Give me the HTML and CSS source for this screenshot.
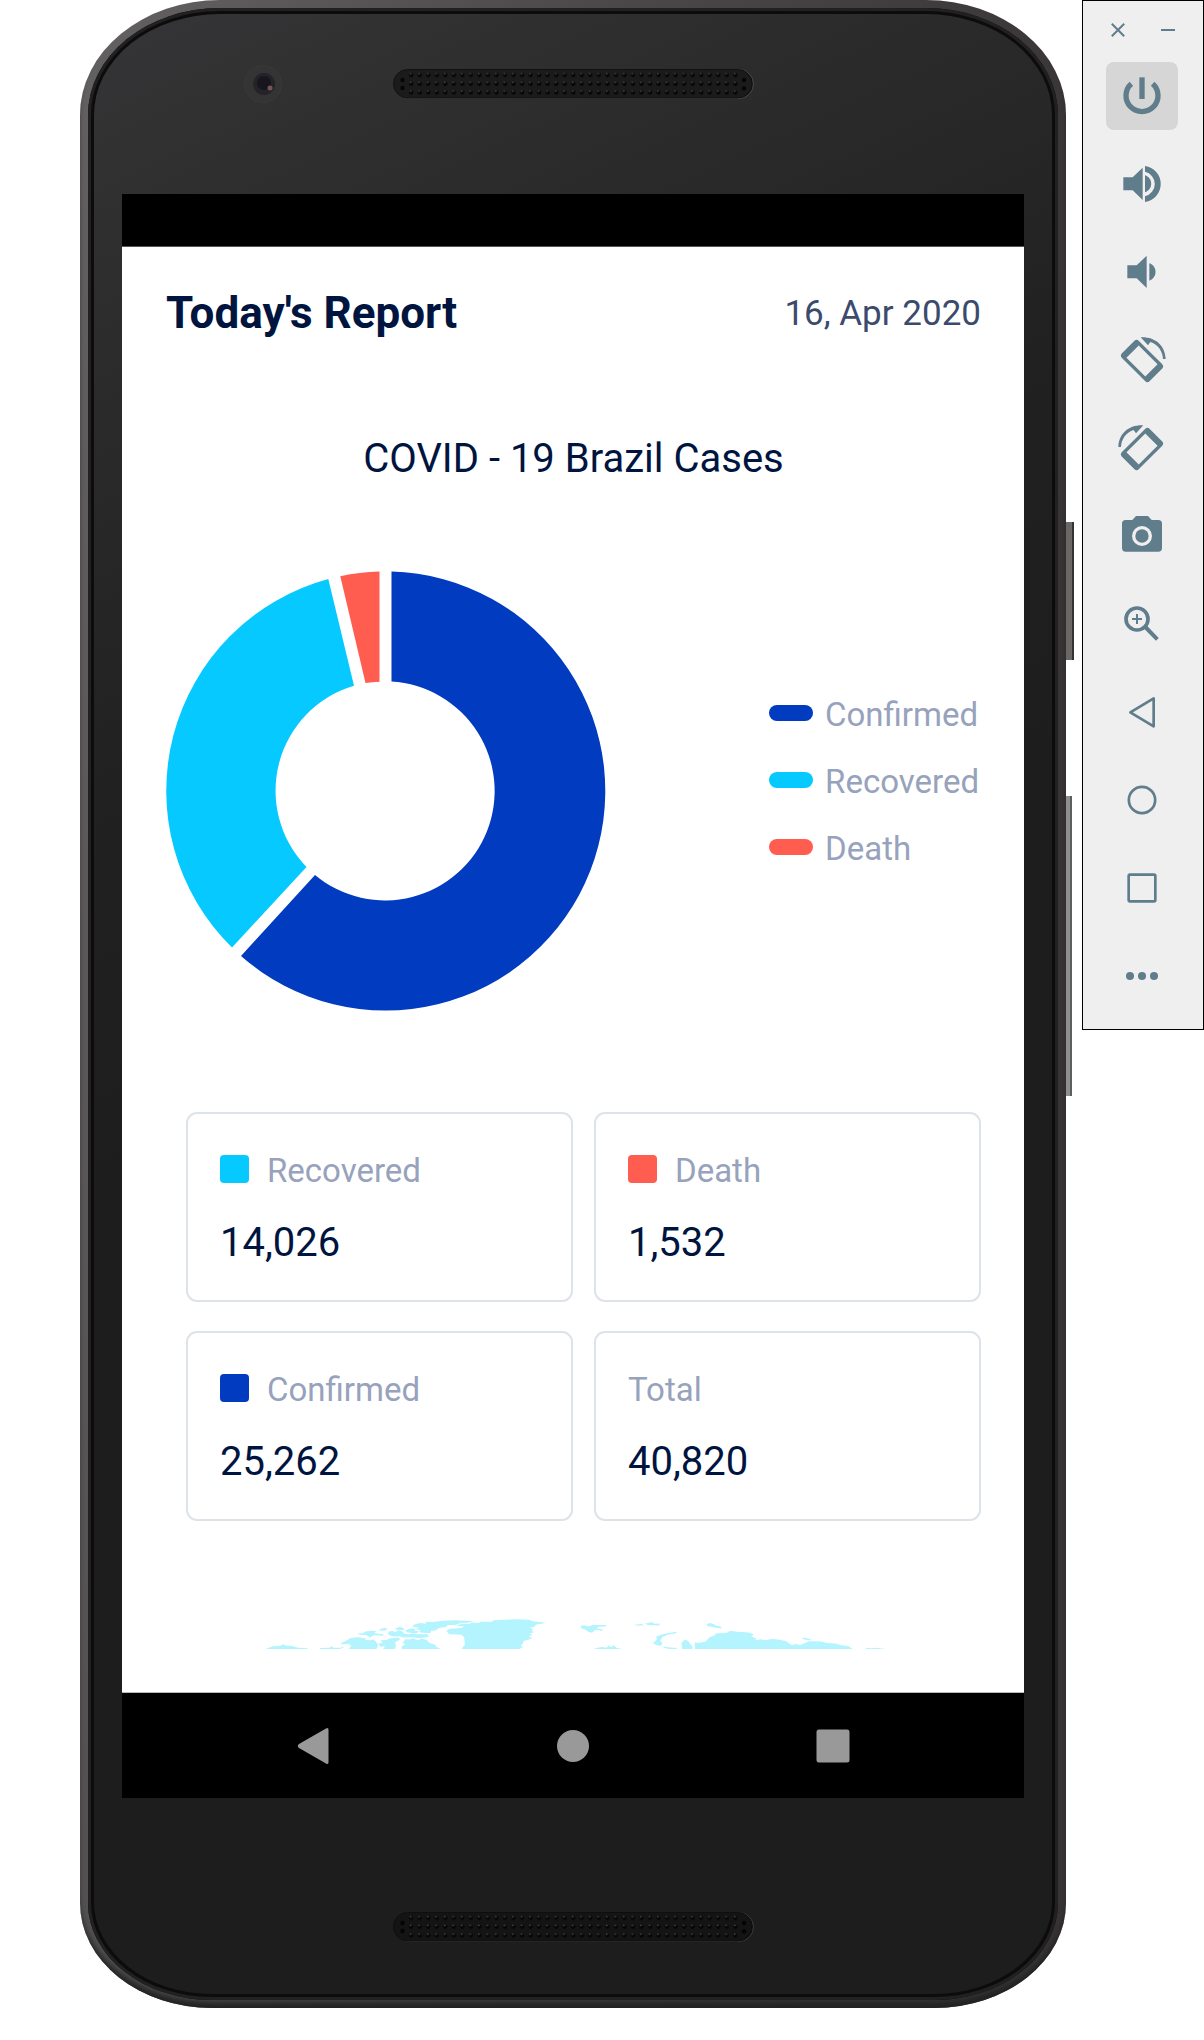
FILE: index.html
```html
<!DOCTYPE html>
<html lang="en">
<head>
<meta charset="utf-8">
<meta name="viewport" content="width=device-width, initial-scale=1">
<title>Today's Report</title>
<link rel="stylesheet" href="styles.css">
</head>
<body>
<div class="emulator">
  <div class="phone">
    <span class="side-key side-key-power"></span>
    <span class="side-key side-key-volume"></span>
    <div class="ring">
      <div class="face">
        <div class="bezel bezel-top">
          <svg class="camera" viewBox="0 0 38 38" aria-hidden="true">
            <circle cx="19" cy="19" r="18.500" fill="#343435" stroke="#3a3a3b"/>
            <circle cx="20" cy="19" r="11" fill="#242329"/>
            <circle cx="20" cy="18" r="7" fill="#18161d"/>
            <circle cx="26" cy="23" r="2.500" fill="#76555a"/>
          </svg>
          <svg class="speaker" viewBox="0 0 361 30" aria-hidden="true">
            <defs>
              <pattern id="holes" x="14" y="1.500" width="8.530" height="8.700" patternUnits="userSpaceOnUse">
                <circle cx="4.200" cy="4.500" r="2.200" fill="#060606"/>
                <circle cx="3.600" cy="3.200" r="0.900" fill="#484848"/>
              </pattern>
            </defs>
            <rect x="1.500" y="0.500" width="359" height="29" rx="14.500" fill="#1b1b1b" stroke="#4a4a4a"/>
            <rect x="0.500" y="0.500" width="358.500" height="28.500" rx="14.200" fill="#1b1b1b" stroke="#111"/>
            <rect x="14" y="1.500" width="332.600" height="26.100" fill="url(#holes)"/>
            <g fill="#060606"><circle cx="9.500" cy="11" r="2.200"/><circle cx="9.500" cy="19" r="2.200"/><circle cx="351" cy="11" r="2.200"/><circle cx="351" cy="19.500" r="2.200"/></g>
          </svg>
        </div>

        <div class="screen">
          <div class="status-bar"></div>
          <main class="report">
            <header class="report-header">
              <h1>Today's Report</h1>
              <time datetime="2020-04-16">16, Apr 2020</time>
            </header>
            <h2>COVID - 19 Brazil Cases</h2>
            <section class="chart-row">
              <svg class="donut" viewBox="0 0 440 440" role="img" aria-label="Confirmed, recovered and death shares">
                <path fill="#003bc0" d="M225.500.6A219.500 219.500 0 1 1 75 385L149 304A109.500 109.500 0 1 0 225.500 110.600Z"/>
                <path fill="#06caff" d="M66 376.500A219.500 219.500 0 0 1 162.300 8L188 114.700A109.500 109.500 0 0 0 140.500 296Z"/>
                <path fill="#ff5d4f" d="M174.300 5.300A219.500 219.500 0 0 1 213.500.6V110.800A109.500 109.500 0 0 0 199.500 112Z"/>
              </svg>
              <ul class="legend">
                <li><span class="pill confirmed"></span>Confirmed</li>
                <li><span class="pill recovered"></span>Recovered</li>
                <li><span class="pill death"></span>Death</li>
              </ul>
            </section>
            <dl class="cards">
              <div class="card"><dt><span class="swatch recovered"></span>Recovered</dt><dd>14,026</dd></div>
              <div class="card"><dt><span class="swatch death"></span>Death</dt><dd>1,532</dd></div>
              <div class="card"><dt><span class="swatch confirmed"></span>Confirmed</dt><dd>25,262</dd></div>
              <div class="card"><dt>Total</dt><dd>40,820</dd></div>
            </dl>
            <svg class="map" viewBox="34 86 1482 92" preserveAspectRatio="none" aria-hidden="true">
              <g fill="#b3f4ff">
                <path d="M42 178L60 170L78 168L84 164L92 168L104 168L120 174L142 175L142 178Z"/>
                <path d="M172 178V175L194 174L200 170L204 174L220 174L226 171L228 174L218 178Z"/>
                <path d="M240 178L246 168L240 163L222 164L222 160L236 152L244 145L262 143L280 146L280 151L292 152L298 149L304 155L310 166L306 178Z"/>
                <path d="M262 132L274 131L280 126L298 123L306 126L300 131L322 134L322 139L300 137L290 144L282 137L264 135Z"/>
                <path d="M312 121L324 115L332 118L328 123L314 124Z M350 117L362 112L372 117L370 122L354 121Z M334 127L344 124L350 128L358 122L368 126L372 133L382 134L392 131L402 134L428 134L430 142L412 145L384 143L370 144L360 140L346 141L334 136Z"/>
                <path d="M316 152L330 151L336 147L358 144L362 150L350 158L352 168L350 178H322L326 168L316 172L310 162L320 160Z"/>
                <path d="M366 178L366 170L374 165L368 160L374 149L386 150L392 146L404 152L414 147L426 152L432 160L444 165L448 171L458 178Z"/>
                <path d="M374 122L386 117L398 118L396 123L408 126L400 131L380 129Z"/>
                <path d="M392 112L394 106L410 101L424 103L422 97L440 98L464 94L492 93L536 95L524 100L506 101L494 107L476 107L470 113L454 116L446 123L436 124L434 131L410 129L408 121L396 119L408 115Z"/>
                <path d="M472 124L480 118L508 116L514 111L496 109L506 104L526 104L532 99L550 101L552 97L580 97L584 93L632 90L670 91L676 96L708 99L698 103L686 105L680 113L670 115L678 119L674 123L680 128L670 132L676 136L668 141L676 145L668 150L656 154L652 165L648 168L654 171L646 178H508L516 164L514 143L508 136L478 134Z"/>
                <path d="M790 108L802 108L808 111L820 107L852 107L850 111L832 112L830 117L844 120L842 124L826 121L818 130L808 127L804 121L794 118Z"/>
                <path d="M822 178L830 174L842 172L852 174L858 167L862 173L870 167L876 174L890 178Z"/>
                <path d="M918 106L936 104L942 108H922Z M944 103L960 98L966 103L978 102L978 108L950 107Z"/>
                <path d="M962 162L972 149L970 142L984 134L1018 127L1018 131L998 136L986 142L980 153L986 163L978 169Z M986 170L998 173L1020 175L1018 178H1002L990 175Z"/>
                <path d="M1090 104L1098 101L1106 104L1112 108L1124 112L1126 117L1112 115L1092 110Z"/>
                <path d="M1032 178L1030 160L1038 150L1046 154L1050 162L1056 170L1056 178Z"/>
                <path d="M1062 178L1062 158L1070 160L1088 156L1096 144L1108 138L1112 132L1138 130L1146 124L1162 127L1190 129L1202 134L1196 141L1208 147L1206 152L1220 149L1226 152L1246 148L1260 150L1278 154L1292 166L1304 163L1312 166L1334 155L1362 156L1376 160L1396 162L1410 167L1426 169L1436 177V178Z"/>
                <path d="M1316 148L1322 144L1338 150L1336 153Z M1466 178L1472 174L1480 176L1490 174L1512 177V178Z"/>
              </g>
            </svg>
          </main>
          <nav class="nav-bar" aria-label="Android navigation">
            <button type="button" aria-label="Back"><svg viewBox="0 0 36 36"><path d="M31 .5Q33.500-1 33.500 2V34Q33.500 37 31 35.500L4 20Q1.500 18 4 16Z"/></svg></button>
            <button type="button" aria-label="Home"><svg viewBox="0 0 36 36"><circle cx="18" cy="18" r="16"/></svg></button>
            <button type="button" aria-label="Recent apps"><svg viewBox="0 0 36 36"><rect x="1.500" y="1.500" width="33" height="33" rx="2.500"/></svg></button>
          </nav>
        </div>

        <div class="bezel bezel-bottom">
          <svg class="speaker" viewBox="0 0 361 30" aria-hidden="true">
            <rect x="1.500" y="0.500" width="359" height="29" rx="14.500" fill="#141414" stroke="#3c3c3c"/>
            <rect x="0.500" y="0.500" width="358.500" height="28.500" rx="14.200" fill="#141414" stroke="#0e0e0e"/>
            <rect x="14" y="1.500" width="332.600" height="26.100" fill="url(#holes)"/>
            <g fill="#040404"><circle cx="9.500" cy="11" r="2.200"/><circle cx="9.500" cy="19" r="2.200"/><circle cx="351" cy="11" r="2.200"/><circle cx="351" cy="19.500" r="2.200"/></g>
          </svg>
        </div>
      </div>
    </div>
  </div>

  <aside class="toolbar">
    <div class="window-controls">
      <button type="button" aria-label="Close"><svg viewBox="0 0 14 14"><path d="M.8.8L13.200 13.200M13.200.8L.8 13.200"/></svg></button>
      <button type="button" aria-label="Minimize"><svg viewBox="0 0 14 14"><path d="M0 7H14"/></svg></button>
    </div>
    <div class="tools">
      <button type="button" class="active" aria-label="Power"><svg viewBox="0 0 216 204"><path fill="none" stroke="currentColor" stroke-width="16" d="M76 65A48 48 0 1 0 140 65"/><path d="M100 46H116V111H100Z"/></svg></button>
      <button type="button" aria-label="Volume up"><svg viewBox="0 0 216 204"><path d="M52 82H80L110 53V150L80 121H52ZM117 76C142 84 142 119 117 127ZM117 48A54.500 54.500 0 0 1 117 156V139A38 38 0 0 0 117 65Z"/></svg></button>
      <button type="button" aria-label="Volume down"><svg viewBox="0 0 216 204"><path d="M64 82H92L122 53V150L92 121H64ZM130 76C155 84 155 120 130 128Z"/></svg></button>
      <button type="button" aria-label="Rotate left"><svg viewBox="0 0 216 204"><g id="rotate"><path fill-rule="evenodd" transform="translate(108 105) rotate(45)" d="M-49-36H49Q59-36 59-26V26Q59 36 49 36H-49Q-59 36-59 26V-26Q-59-36-49-36ZM-40-26V26H40V-26Z"/><path d="M104 34C148 32 177 58 179 99H171C170 75 155 55 133 48L126 58Z"/></g></svg></button>
      <button type="button" aria-label="Rotate right"><svg viewBox="0 0 216 204"><use href="#rotate" transform="translate(216 0) scale(-1 1)"/></svg></button>
      <button type="button" aria-label="Take screenshot"><svg viewBox="0 0 216 204"><path fill-rule="evenodd" d="M90 42H126L137 54H157Q168 54 168 65V138Q168 149 157 149H59Q48 149 48 138V65Q48 54 59 54H79ZM108 72A30 30 0 1 0 108 132A30 30 0 1 0 108 72Z"/><circle cx="108" cy="102" r="20"/></svg></button>
      <button type="button" aria-label="Zoom"><svg viewBox="0 0 216 204"><g fill="none" stroke="currentColor"><circle cx="93" cy="87" r="33" stroke-width="11"/><path stroke-width="6" d="M78 87H108M93 72V102"/><path stroke-width="12" d="M118 111L154 148"/></g></svg></button>
      <button type="button" aria-label="Back"><svg viewBox="0 0 216 204"><path fill="none" stroke="currentColor" stroke-width="8" stroke-linejoin="round" d="M73 103L143 61V145Z"/></svg></button>
      <button type="button" aria-label="Home"><svg viewBox="0 0 216 204"><circle cx="108" cy="102" r="39.500" fill="none" stroke="currentColor" stroke-width="8"/></svg></button>
      <button type="button" aria-label="Overview"><svg viewBox="0 0 216 204"><rect x="68" y="62" width="80" height="80" rx="4" fill="none" stroke="currentColor" stroke-width="8"/></svg></button>
      <button type="button" aria-label="More"><svg viewBox="0 0 216 204"><circle cx="72" cy="102" r="12"/><circle cx="108" cy="102" r="12"/><circle cx="144" cy="102" r="12"/></svg></button>
    </div>
  </aside>
</div>
</body>
</html>
```
FILE: styles.css
```css
* {
  box-sizing: border-box;
}

body {
  margin: 0;
  background: #fff;
  font-family: Roboto, "Liberation Sans", sans-serif;
  color: #001440;
}

h1, h2, ul, dl, dd {
  margin: 0;
  padding: 0;
}

svg {
  display: block;
}

button {
  padding: 0;
  border: 0;
  background: none;
  cursor: pointer;
}

.emulator {
  display: flex;
  align-items: flex-start;
  gap: 16px;
  padding-left: 80px;
}

/* Phone body: metal rim, black ring, then the front face */
.phone {
  position: relative;
  flex: 1;
  min-width: 0;
  padding: 8px;
  border-radius: 140px 140px 132px 132px / 115px 115px 105px 105px;
  background: linear-gradient(100deg, #636162, #4a4849 40%, #383435 80%);
  box-shadow: inset 0 -8px 6px -2px #222;
}

.ring {
  padding: 6px;
  border-radius: 132px 132px 124px 124px / 107px 107px 97px 97px;
  background: #0c0c0c;
  box-shadow: inset 0 0 0 3px #222121;
}

.face {
  padding: 0 28px;
  border-radius: 126px 126px 118px 118px / 101px 101px 92px 92px;
  background: linear-gradient(155deg, #353537, #2c2c2c 14%, #212121 32%, #1d1d1d 50%);
}

.bezel {
  display: grid;
  grid-template-columns: 1fr 361px 1fr;
}

.bezel-top {
  align-items: center;
  height: 180px;
  padding-bottom: 41px;
}

.bezel-bottom {
  align-items: start;
  height: 196px;
  padding-top: 114px;
}

.speaker {
  grid-column: 2;
  width: 361px;
  height: 30px;
}

.camera {
  justify-self: center;
  width: 38px;
  height: 38px;
  margin-left: 12px;
}

.side-key {
  position: absolute;
  left: 100%;
}

.side-key-power {
  top: 522px;
  width: 8px;
  height: 138px;
  border-right: 2px solid #353230;
  background: #6a6866;
}

.side-key-volume {
  top: 796px;
  width: 6px;
  height: 300px;
  border-right: 2px solid #5e5e5e;
  background: #8f8f8f;
}

/* Screen */
.screen {
  background: #fff;
}

.status-bar {
  height: 53px;
  border-bottom: 1px solid #555;
  background: #000;
}

.report {
  display: flex;
  flex-direction: column;
  padding: 40px 43px 43px 44px;
}

.report-header {
  display: flex;
  justify-content: space-between;
  align-items: center;
}

h1 {
  font-size: 44px;
  line-height: 52px;
  font-weight: 700;
}

time {
  font-size: 35px;
  color: #3c4a6e;
}

h2 {
  margin-top: 96px;
  font-size: 40px;
  line-height: 48px;
  font-weight: 400;
  text-align: center;
}

.chart-row {
  display: flex;
  justify-content: space-between;
  align-items: center;
  margin-top: 88px;
}

.donut {
  width: 440px;
  height: 440px;
}

.legend {
  display: flex;
  flex-direction: column;
  gap: 23px;
  padding: 0 2px 18px 0;
  list-style: none;
  font-size: 33px;
  line-height: 44px;
  color: #97a2bc;
}

.legend li {
  display: flex;
  align-items: center;
  gap: 12px;
}

.pill {
  width: 44px;
  height: 16px;
  margin-bottom: 4px;
  border-radius: 8px;
}

.confirmed {
  background: #003bc0;
}

.recovered {
  background: #06caff;
}

.death {
  background: #ff5d4f;
}

.cards {
  display: grid;
  grid-template-columns: 1fr 1fr;
  gap: 29px 21px;
  margin: 101px 0 0 20px;
}

.card {
  padding: 35px 32px 33px;
  border: 2px solid #dde3e8;
  border-radius: 11px;
}

.card dt {
  display: flex;
  align-items: center;
  gap: 18px;
  font-size: 33px;
  line-height: 44px;
  color: #97a2bc;
}

.card dd {
  margin-top: 26px;
  font-size: 40px;
  line-height: 48px;
}

.swatch {
  width: 29px;
  height: 28px;
  margin-bottom: 4px;
  border-radius: 4px;
}

.map {
  align-self: center;
  width: 624px;
  height: 31px;
  margin-top: 97px;
}

.nav-bar {
  display: flex;
  justify-content: center;
  align-items: center;
  gap: 224px;
  height: 106px;
  border-top: 1px solid #bbb;
  background: #000;
}

.nav-bar svg {
  width: 36px;
  height: 36px;
  fill: #999;
}

/* Emulator toolbar */
.toolbar {
  width: 122px;
  padding-bottom: 19px;
  border: 1px solid #000;
  background: #efefef;
}

.window-controls {
  display: flex;
  justify-content: space-between;
  align-items: center;
  height: 61px;
  padding: 0 28px 3px;
}

.window-controls svg {
  width: 14px;
  height: 14px;
  fill: none;
  stroke: #607d8b;
  stroke-width: 2;
}

.tools {
  display: flex;
  flex-direction: column;
  gap: 20px;
  padding-left: 23px;
}

.tools button {
  width: 72px;
  height: 68px;
  border-radius: 8px;
  color: #607d8b;
}

.tools .active {
  background: #d6d6d6;
}

.tools svg {
  width: 72px;
  height: 68px;
  fill: currentColor;
}
```
